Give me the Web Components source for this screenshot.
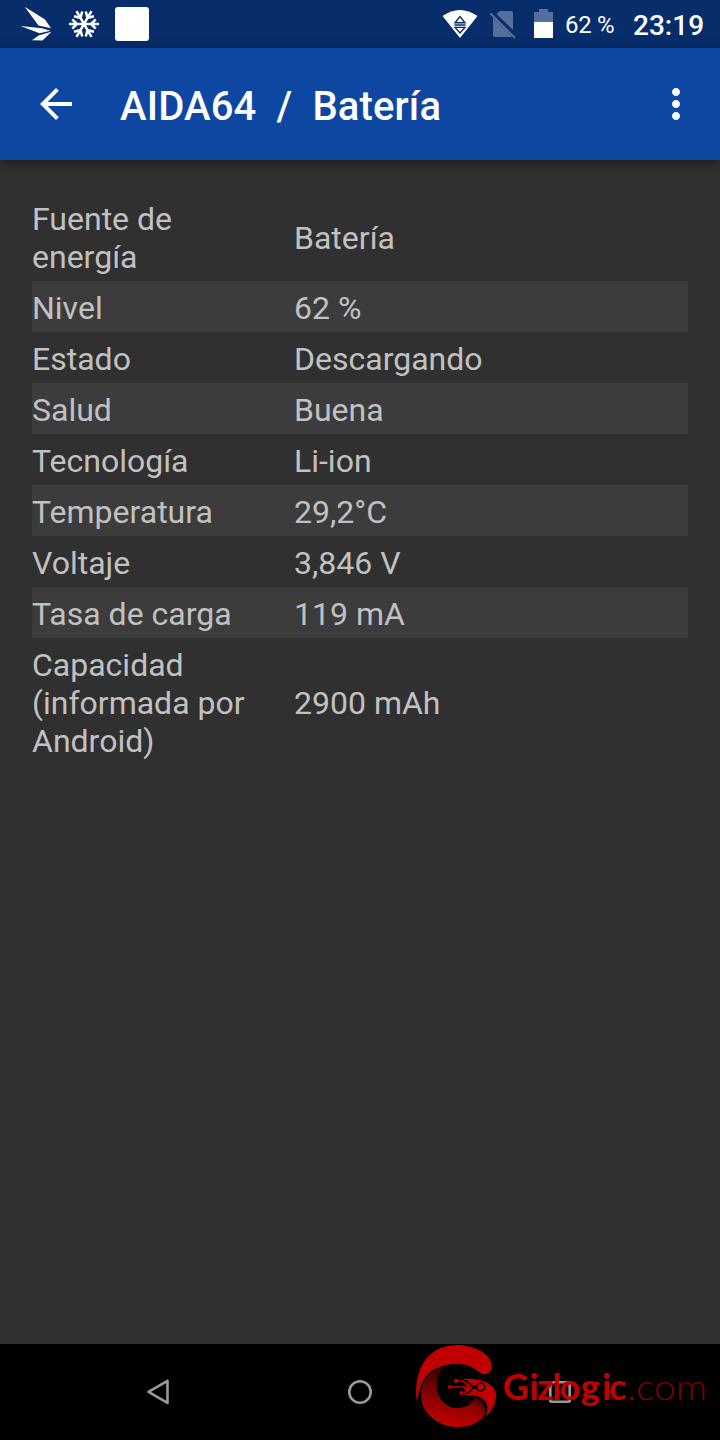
<!DOCTYPE html>
<html lang="es">
<head>
<meta charset="utf-8">
<title>AIDA64 / Batería</title>
<style>
  html, body { margin: 0; height: 100%; }
  body {
    background: #303030;
    font-family: Roboto, "Noto Sans", sans-serif;
    overflow: hidden;
  }
</style>
</head>
<body>
<aida-screen>
  <status-bar slot="top" battery="62 %" clock="23:19"></status-bar>
  <app-bar slot="top">AIDA64&nbsp; /&nbsp; Batería</app-bar>
  <info-list>
    <info-row label="Fuente de energía">Batería</info-row>
    <info-row label="Nivel">62 %</info-row>
    <info-row label="Estado">Descargando</info-row>
    <info-row label="Salud">Buena</info-row>
    <info-row label="Tecnología">Li-ion</info-row>
    <info-row label="Temperatura">29,2°C</info-row>
    <info-row label="Voltaje">3,846 V</info-row>
    <info-row label="Tasa de carga">119 mA</info-row>
    <info-row label="Capacidad (informada por Android)">2900 mAh</info-row>
  </info-list>
  <nav-bar slot="bottom"><giz-watermark></giz-watermark></nav-bar>
</aida-screen>

<script>
class AidaScreen extends HTMLElement {
  constructor() {
    super();
    this.attachShadow({ mode: 'open' }).innerHTML = `
      <style>
        :host {
          display: flex;
          flex-direction: column;
          width: 720px;
          height: 1440px;
          background: #303030;
        }
        main { flex: 1; }
      </style>
      <slot name="top"></slot>
      <main><slot></slot></main>
      <slot name="bottom"></slot>
    `;
  }
}

class StatusBar extends HTMLElement {
  connectedCallback() {
    this.attachShadow({ mode: 'open' }).innerHTML = `
      <style>
        :host {
          display: flex;
          justify-content: space-between;
          height: 48px;
          background: #082d6b;
          color: #fff;
        }
        svg { display: block; }
        .status { display: flex; }
        .battery {
          width: 68px;
          font-size: 24px;
          line-height: 50px;
          letter-spacing: -0.3px;
          white-space: nowrap;
        }
        .clock {
          width: 87px;
          font-size: 28px;
          font-weight: 500;
          line-height: 52px;
        }
      </style>
      <svg width="160" height="48" viewBox="0 0 160 48" fill="#fff">
        <path d="M24.700 6.800 45 19.500 51 28.300 38.500 25.600ZM20.500 26 42 28.300 50.500 30.700 39.500 33.200ZM51.500 31.800 42.500 40.500 32 40.300 38.500 35.500Z"/>
        <g id="flake" fill="none" stroke="#fff" stroke-width="2.5"></g>
        <rect x="115" y="7" width="34" height="34" rx="3"/>
      </svg>
      <div class="status">
        <svg width="123" height="48" viewBox="442 0 123 48">
          <path fill="#fff" d="M442.500 16Q460 4 477.500 16L460 38Z"/>
          <path fill="none" stroke="#082d6b" stroke-width="1.4" d="M460 16.500 455 22.700H465ZM454.500 25H465.500M455 27.400H465L460 33Z"/>
          <path fill="#566f9a" d="M500 11H511Q513 11 513 13V30L496.600 14ZM493 17.500 512 36.500Q511.500 37 510.500 37H495Q493 37 493 35Z"/>
          <path fill="none" stroke="#566f9a" stroke-width="2.2" d="M490.500 13.500 515 38"/>
          <path fill="#566f9a" d="M539 9H548V12H553V22H534V12H539Z"/>
          <path fill="#fff" d="M534 22H553V38H534Z"/>
        </svg>
        <span class="battery">${this.getAttribute('battery')}</span>
        <span class="clock">${this.getAttribute('clock')}</span>
      </div>
    `;
    // six identical arms around the snowflake centre
    const arm = 'M84 24V9M79.300 12.300 84 17 88.700 12.300';
    this.shadowRoot.getElementById('flake').innerHTML = [30, 90, 150, 210, 270, 330]
      .map(a => `<path d="${arm}" transform="rotate(${a} 84 24)"/>`).join('');
  }
}

class AppBar extends HTMLElement {
  constructor() {
    super();
    this.attachShadow({ mode: 'open' }).innerHTML = `
      <style>
        :host {
          display: flex;
          align-items: center;
          box-sizing: border-box;
          height: 112px;
          padding: 0 20px 0 32px;
          background: #0d47a1;
          color: #fff;
          box-shadow: 0 3px 12px rgba(0, 0, 0, 0.4);
        }
        svg { flex: none; fill: #fff; }
        h1 {
          flex: 1;
          margin: 6px 0 0 40px;
          font-size: 40px;
          font-weight: 500;
          line-height: 48px;
          letter-spacing: 0.14px;
          white-space: nowrap;
        }
      </style>
      <svg width="48" height="48" viewBox="0 0 24 24"><path d="M20 11H7.830l5.590-5.590L12 4l-8 8 8 8 1.410-1.410L7.830 13H20v-2z"/></svg>
      <h1><slot></slot></h1>
      <svg width="48" height="48" viewBox="0 0 24 24"><path d="M12 8c1.100 0 2-.9 2-2s-.9-2-2-2-2 .9-2 2 .9 2 2 2zm0 2c-1.100 0-2 .9-2 2s.9 2 2 2 2-.9 2-2-.9-2-2-2zm0 6c-1.100 0-2 .9-2 2s.9 2 2 2 2-.9 2-2-.9-2-2-2z"/></svg>
    `;
  }
}

class InfoList extends HTMLElement {
  constructor() {
    super();
    this.attachShadow({ mode: 'open' }).innerHTML = `
      <style>
        :host { display: block; padding: 32px; }
        ::slotted(info-row:nth-child(even)) { background: #3c3c3c; }
      </style>
      <slot></slot>
    `;
  }
}

class InfoRow extends HTMLElement {
  connectedCallback() {
    this.attachShadow({ mode: 'open' }).innerHTML = `
      <style>
        :host {
          display: grid;
          grid-template-columns: 262px 1fr;
          align-items: center;
          padding: 8px 0 5px;
          color: #c1c1c1;
          font-size: 32px;
          line-height: 38px;
        }
        .label { padding-right: 32px; }
      </style>
      <span class="label">${this.getAttribute('label')}</span>
      <span><slot></slot></span>
    `;
  }
}

class NavBar extends HTMLElement {
  constructor() {
    super();
    this.attachShadow({ mode: 'open' }).innerHTML = `
      <style>
        :host {
          position: relative;
          display: flex;
          align-items: center;
          justify-content: space-between;
          box-sizing: border-box;
          height: 96px;
          padding: 0 140px;
          background: #000;
        }
        svg { fill: none; stroke: #999; stroke-width: 2.6; stroke-linejoin: round; }
        ::slotted(*) { position: absolute; left: 400px; top: -9px; }
      </style>
      <svg width="40" height="40" viewBox="0 0 40 40"><path d="M27.500 8.800V30.900L8.500 19.800Z"/></svg>
      <svg width="40" height="40" viewBox="0 0 40 40"><circle cx="20" cy="20" r="10.700"/></svg>
      <svg width="40" height="40" viewBox="0 0 40 40"><rect x="10.300" y="10.300" width="19.400" height="19.400" rx="1"/></svg>
      <slot></slot>
    `;
  }
}

class GizWatermark extends HTMLElement {
  constructor() {
    super();
    this.attachShadow({ mode: 'open' }).innerHTML = `
      <style>
        :host { display: block; width: 320px; height: 105px; }
        svg { display: block; }
        text { font-family: Lato, "Open Sans", sans-serif; font-size: 36px; }
      </style>
      <svg width="320" height="105" viewBox="0 0 320 105">
        <defs>
          <linearGradient id="low" x1=".55" y1="0" x2=".35" y2="1">
            <stop offset="0" stop-color="#2c0000"/>
            <stop offset=".55" stop-color="#8b0000"/>
            <stop offset="1" stop-color="#c40000"/>
          </linearGradient>
          <linearGradient id="tip" gradientUnits="userSpaceOnUse" x1="245" y1="190" x2="212" y2="240">
            <stop offset="0" stop-color="#300000"/>
            <stop offset="1" stop-color="#b00000" stop-opacity="0"/>
          </linearGradient>
        </defs>
        <g transform="scale(.33333)">
          <path fill="#000" d="M48 150C58 10 270 0 278 85L290 180 260 250 172 278C90 275 55 235 60 195Z"/>
          <path fill="url(#low)" d="M136 97C90 98 62 135 64 192C70 240 120 276 172 276C212 276 240 262 253 240C259 214 245 194 225 190C214 208 198 219 172 219C135 219 110 188 110 152C110 128 120 108 136 97Z"/>
          <path fill="url(#tip)" d="M225 190C245 194 259 214 253 240C243 256 228 266 200 273L190 218Q215 208 225 190Z"/>
          <path fill="#c00000" d="M50 194C42 130 65 30 172 30C224 30 274 58 275 92C275 107 267 117 254 117C230 117 228 87 172 87C105 87 60 118 53 194Z"/>
          <path fill="#c00000" d="M190 132C240 128 276 144 286 168C294 195 278 228 257 244C268 218 262 190 230 183C218 180 207 180 192 180L203 170 190 160 209 154Z"/>
          <g fill="none" stroke="#000" stroke-width="4">
            <circle cx="242" cy="156" r="12"/>
            <path d="M230 156H204M230 153H217L199 137H188M230 160H219L205 174H192"/>
          </g>
          <g fill="none" stroke="#c00000" stroke-width="4">
            <path d="M150 156H213M174 138H188L205 153M184 174H195L208 160"/>
          </g>
          <g fill="#c00000">
            <rect x="163" y="132" width="11" height="11"/>
            <circle cx="150" cy="156" r="6"/>
            <circle cx="184" cy="174" r="6"/>
          </g>
        </g>
        <text x="102.800 129.600 137.300 152.400 159.600 180.800 202 209" y="64.600" fill="#c00000" font-weight="700">Gizlogic</text>
        <text x="227" y="64.600" fill="#7c0000" font-weight="300" textLength="80" lengthAdjust="spacingAndGlyphs">.com</text>
      </svg>
    `;
  }
}

customElements.define('aida-screen', AidaScreen);
customElements.define('status-bar', StatusBar);
customElements.define('app-bar', AppBar);
customElements.define('info-list', InfoList);
customElements.define('info-row', InfoRow);
customElements.define('nav-bar', NavBar);
customElements.define('giz-watermark', GizWatermark);
</script>
</body>
</html>
